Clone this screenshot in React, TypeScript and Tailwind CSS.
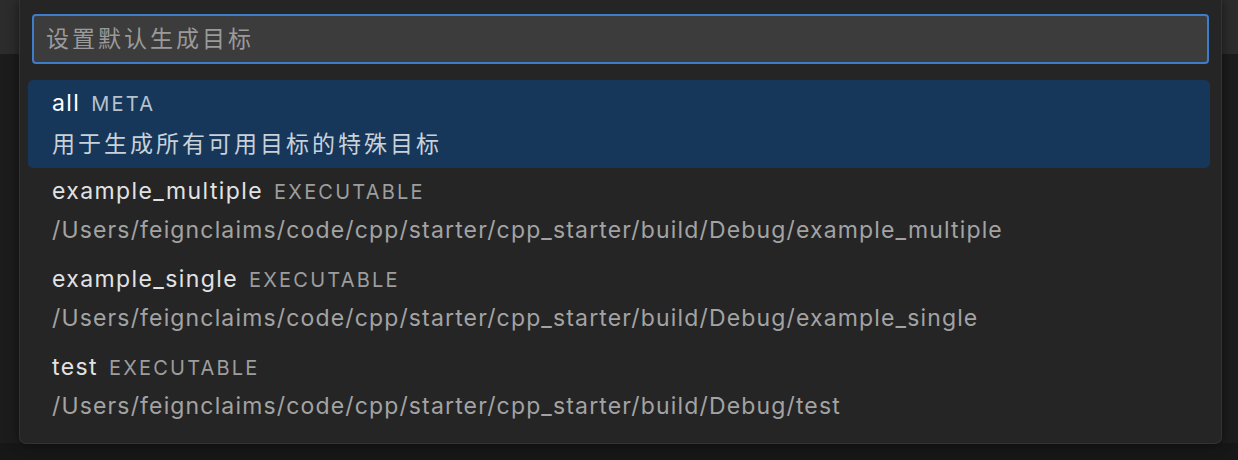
const items = [
  { label: 'all', desc: 'META', detail: '用于生成所有可用目标的特殊目标' },
  {
    label: 'example_multiple',
    desc: 'EXECUTABLE',
    detail: '/Users/feignclaims/code/cpp/starter/cpp_starter/build/Debug/example_multiple',
  },
  {
    label: 'example_single',
    desc: 'EXECUTABLE',
    detail: '/Users/feignclaims/code/cpp/starter/cpp_starter/build/Debug/example_single',
  },
  {
    label: 'test',
    desc: 'EXECUTABLE',
    detail: '/Users/feignclaims/code/cpp/starter/cpp_starter/build/Debug/test',
  },
];

export default function App() {
  return (
    <div
      className="relative h-[460px] w-full overflow-hidden bg-[#1c1c1c]"
      style={{ fontFamily: 'Inter, "Noto Sans CJK SC", sans-serif' }}
    >
      {/* editor backdrop */}
      <div className="flex h-full flex-col">
        <div className="h-[54px] bg-[#2c2c2c]" />
        <div className="flex-1 bg-[#1c1c1c]" />
        <div className="h-[17px] bg-[#171717]" />
      </div>

      {/* quick pick */}
      <div className="absolute left-[19px] top-0 h-[444px] w-[1203px] rounded-b-[7px] border-x border-b border-[#333333] bg-[#252526] shadow-[0_0_12px_rgba(0,0,0,0.5)]">
        <div className="px-[12px] pt-[14px]">
          <div className="flex h-[50px] items-center rounded-[4px] border-2 border-[#3d7dcc] bg-[#3c3c3c] px-[12px]">
            <span className="text-[23px] tracking-[3px] text-[#9a9a9a]">设置默认生成目标</span>
          </div>
        </div>

        <div className="mt-[16px] flex flex-col pl-[8px] pr-[11px]">
          {items.map((item, i) => {
            const selected = i === 0;
            return (
              <div
                key={item.label}
                className={`flex h-[88px] flex-col pl-[24px] pt-[4px] ${
                  selected ? 'rounded-[5px] bg-[#163759]' : ''
                }`}
              >
                <div className="flex h-[39px] items-center gap-[11px]">
                  <span
                    className={`text-[23px] tracking-[1.4px] ${selected ? 'text-white' : 'text-[#e2e2e2]'}`}
                  >
                    {item.label}
                  </span>
                  <span
                    className={`text-[20px] tracking-[2.2px] ${
                      selected ? 'text-[#b7c2cf]' : 'text-[#9d9d9d]'
                    }`}
                  >
                    {item.desc}
                  </span>
                </div>
                <div
                  className={`flex h-[38px] items-center ${
                    selected
                      ? 'pt-[4px] text-[23px] tracking-[3px] text-[#c9d1da]'
                      : 'text-[23px] tracking-[1.15px] text-[#a3a3a3]'
                  }`}
                >
                  {item.detail}
                </div>
              </div>
            );
          })}
        </div>
      </div>
    </div>
  );
}
